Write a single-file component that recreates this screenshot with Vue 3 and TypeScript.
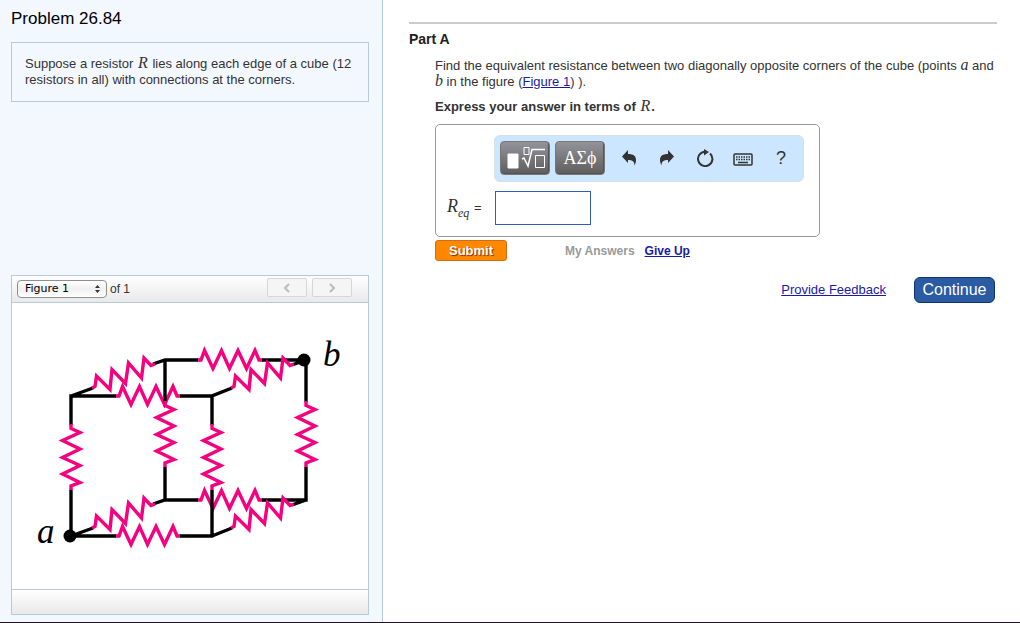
<script setup lang="ts">
import { ref } from 'vue'

interface Point {
  x: number
  y: number
}

const figure = ref('Figure 1')
const answer = ref('')

const horizontal: Point[] = [
  { x: 198, y: 360 },
  { x: 116, y: 396 },
  { x: 198, y: 500 },
  { x: 116, y: 536 },
]
const vertical: Point[] = [
  { x: 71, y: 425 },
  { x: 212, y: 425 },
  { x: 165, y: 402 },
  { x: 306, y: 402 },
]
const diagonal: Point[] = [
  { x: 93, y: 388 },
  { x: 232, y: 388 },
  { x: 93, y: 528 },
  { x: 232, y: 528 },
]
const at = (p: Point): string => `translate(${p.x} ${p.y})`
</script>

<template>
  <div class="page">
    <aside class="side">
      <h1>Problem 26.84</h1>
      <p class="intro">
        Suppose a resistor <i class="math wide">R</i> lies along each edge of a cube (12 resistors in all) with
        connections at the corners.
      </p>

      <section class="figure">
        <header class="figure-head">
          <label class="picker">
            <select v-model="figure" aria-label="Figure">
              <option>Figure 1</option>
            </select>
            <svg class="arrows" viewBox="0 0 5 8" aria-hidden="true">
              <path d="M0 3 2.500 0 5 3zM0 5h5L2.500 8z" />
            </svg>
          </label>
          <span class="count">of 1</span>
          <button class="nav" type="button" aria-label="Previous figure">
            <svg viewBox="0 0 8 10"><path d="M6 1 2 5l4 4" /></svg>
          </button>
          <button class="nav" type="button" aria-label="Next figure">
            <svg viewBox="0 0 8 10"><path d="m2 1 4 4-4 4" /></svg>
          </button>
        </header>
        <svg class="circuit" viewBox="12 303 356 286" role="img" aria-label="Cube of twelve resistors">
          <defs>
            <path id="res-h" d="M-1 0H3L6.500-9.500 15 8.500 23.500-9.500 31.500 8.500 40-9.500 48.500 8.500 57-9.500 61 0H65" />
            <path id="res-v" d="M0-1V3.500L9 7.500-8.500 15.500 9 24-8.500 32.500 9 40.500-8.500 49 9 57.500 0 61V65" />
            <path
              id="res-d"
              d="M-1 0 2-1.500 3.500-12 17 1.500 19-18.500 32.500-4.500 35.500-25 48.500-10 51-30 58-22.500 62-24"
            />
          </defs>
          <g class="resistor">
            <use v-for="(p, i) in horizontal" :key="'h' + i" href="#res-h" :transform="at(p)" />
          </g>
          <path
            class="wire"
            d="M71 425V396H116M71 396 93 388M153 364 165 360H198M262 360H305M180 396H212M212 425V396L232 388M165 360V402M306 402V360L292 365M71 490V536H116M71 536 93 528M153 504 165 500H198M165 467V500M180 536H212V490M212 536 232 528M262 500H306V467M306 500 292 505"
          />
          <g class="resistor">
            <use v-for="(p, i) in vertical" :key="'v' + i" href="#res-v" :transform="at(p)" />
            <use v-for="(p, i) in diagonal" :key="'d' + i" href="#res-d" :transform="at(p)" />
          </g>
          <circle cx="70" cy="536" r="6.500" />
          <circle cx="304" cy="360" r="6.500" />
          <text x="37" y="543">a</text>
          <text x="323" y="366">b</text>
        </svg>
        <footer class="figure-foot"></footer>
      </section>
    </aside>

    <main class="main">
      <h2>Part A</h2>
      <div class="part">
        <p>
          Find the equivalent resistance between two diagonally opposite corners of the cube (points
          <i class="math">a</i> and <i class="math">b</i> in the figure (<a href="#figure">Figure 1</a>) ).
        </p>
        <p class="express">Express your answer in terms of <i class="math wide">R</i>.</p>

        <form class="answer" @submit.prevent>
          <div class="toolbar">
            <button class="key" type="button" aria-label="Math templates">
              <svg viewBox="1 1 48 32">
                <path class="solid" d="M8 13h10v14H8z" />
                <path d="M24 6.500h5v7h-5z" />
                <path class="root" d="M22 18l2-1 4 8 4-16.500H45" />
                <path d="M35.500 14.500h9v12h-9z" />
              </svg>
            </button>
            <button class="key greek" type="button">ΑΣϕ</button>
            <div class="tools">
              <button type="button" aria-label="Undo">
                <svg viewBox="0 0 16 16">
                  <path class="fill" d="M1 6.500 7 0v4c5.500 0 8 2 8 6 0 2-.5 3.500-1.500 5.500 0-4-2-5.500-6.500-5.500v3z" />
                </svg>
              </button>
              <button type="button" aria-label="Redo">
                <svg viewBox="0 0 16 16">
                  <path class="fill" d="M15 6.500 9 0v4c-5.500 0-8 2-8 6 0 2 .5 3.500 1.500 5.500 0-4 2-5.500 6.500-5.500v3z" />
                </svg>
              </button>
              <button type="button" aria-label="Reset">
                <svg class="big" viewBox="0 0 18 18">
                  <path class="line" d="M14 4.500A7.200 7.200 0 1 1 9 2.700" />
                  <path class="fill" d="M8 0 13 3 8 6.500z" />
                </svg>
              </button>
              <button type="button" aria-label="Keyboard">
                <svg class="keyboard" viewBox="0 0 20 13">
                  <rect class="thin" x="1" y="1" width="18" height="11" rx="1" />
                  <path class="keys" d="M3 4h14M3 6.500h14" />
                  <path class="thin" d="M5 9.500h10" />
                </svg>
              </button>
              <button class="help" type="button" aria-label="Help">?</button>
            </div>
          </div>
          <div class="entry">
            <label for="req"><i class="math">R<sub>eq</sub></i> =</label>
            <input id="req" v-model="answer" type="text" autocomplete="off" />
          </div>
        </form>

        <div class="actions">
          <button class="submit" type="button">Submit</button>
          <span class="mine">My Answers</span>
          <a href="#give-up">Give Up</a>
        </div>
      </div>

      <div class="next">
        <a href="#feedback">Provide Feedback</a>
        <button class="continue" type="button">Continue</button>
      </div>
    </main>
  </div>
</template>

<style>
body {
  margin: 0;
  background: #fff;
}
</style>

<style scoped>
.page,
.page * {
  box-sizing: border-box;
}
.page {
  display: flex;
  min-height: 100vh;
  border-bottom: 1px solid #20101f;
  font: 13px/16px 'Liberation Sans', Arial, sans-serif;
  color: #333;
}
h1,
h2,
p {
  margin: 0;
}
button,
input,
select {
  margin: 0;
  font: inherit;
}
button {
  padding: 0;
  cursor: pointer;
}
a {
  color: #1a1aa6;
}
.math {
  font-family: 'Liberation Serif', 'Times New Roman', serif;
  font-size: 16px;
  font-weight: normal;
  line-height: 1px;
}
.wide {
  margin: 0 1px;
}

.side {
  display: flex;
  flex-direction: column;
  flex: 0 0 383px;
  padding: 9px 13px 7px 11px;
  border-right: 1px solid #b5cadd;
  background: #f3f8ff;
}
h1 {
  margin-bottom: 13px;
  font-size: 17px;
  font-weight: normal;
  line-height: 20px;
  color: #000;
}
.intro {
  padding: 13px;
  border: 1px solid #b5cadd;
}
.figure {
  margin-top: auto;
  border: 1px solid #b5cadd;
  background: #fff;
}
.figure-head {
  display: flex;
  align-items: center;
  height: 27px;
  padding: 0 16px 0 5px;
  border-bottom: 1px solid #b5cadd;
  background: linear-gradient(#fff, #e9e9e9);
}
.picker {
  display: grid;
  align-items: center;
}
.picker > * {
  grid-area: 1 / 1;
}
select {
  appearance: none;
  width: 90px;
  height: 18px;
  padding: 0 7px;
  border: 1px solid #8f8f8f;
  border-radius: 4px;
  background: linear-gradient(#fff, #f0f0f0 50%, #fff);
  font: 11px/14px 'DejaVu Sans', sans-serif;
  color: #000;
}
.arrows {
  justify-self: end;
  width: 5px;
  height: 8px;
  margin-right: 7px;
  fill: #333;
  pointer-events: none;
}
.count {
  margin: 0 auto 0 3px;
  font-size: 12px;
}
.nav {
  display: grid;
  place-items: center;
  width: 40px;
  height: 19px;
  margin: 0 0 3px 5px;
  border: 1px solid #d6d6d6;
  border-radius: 2px;
  background: #f5f5f5;
}
.nav svg {
  width: 8px;
  height: 10px;
  fill: none;
  stroke: #bbb;
  stroke-width: 2;
}
.circuit {
  display: block;
  width: 100%;
}
.resistor {
  fill: none;
  stroke: #f5007f;
  stroke-width: 3.4;
  stroke-miterlimit: 8;
}
.wire {
  fill: none;
  stroke: #000;
  stroke-width: 3.4;
}
.circuit circle,
.circuit text {
  fill: #000;
}
.circuit text {
  font: italic 35px 'Liberation Serif', 'Times New Roman', serif;
}
.figure-foot {
  height: 25px;
  border-top: 1px solid #b5cadd;
  background: linear-gradient(#fff, #e9e9e9);
}

.main {
  flex: 1;
  min-width: 0;
  margin: 22px 23px 0 26px;
  border-top: 2px solid #ccc;
}
h2 {
  margin: 7px 0 11px;
  font-size: 14px;
  line-height: 16px;
  color: #222;
}
.part {
  margin-left: 26px;
}
.express {
  margin: 9px 0;
  font-weight: bold;
}
.answer {
  max-width: 385px;
  padding: 10px 15px 11px 11px;
  border: 1px solid #999;
  border-radius: 5px;
}
.toolbar {
  display: flex;
  align-items: center;
  gap: 5px;
  height: 47px;
  margin-left: 47px;
  padding: 0 5px 2px;
  border: 1px solid #d5dfe8;
  border-radius: 6px;
  background: #cce6ff;
}
.key {
  flex: none;
  width: 50px;
  height: 34px;
  border: 1px solid #777;
  border-radius: 4px;
  background: linear-gradient(#93939b, #5e5e5e);
  box-shadow: inset -1px -1px 1px #555;
  color: #fff;
}
.key svg {
  display: block;
  width: 48px;
  height: 32px;
  fill: none;
  stroke: #fff;
}
.key .solid {
  fill: #fff;
}
.key .root {
  stroke-width: 1.5;
}
.greek {
  font: 18px/30px 'Liberation Serif', serif;
}
.tools {
  display: flex;
  flex: 1;
}
.tools button {
  display: grid;
  place-items: center;
  width: 38px;
  height: 34px;
  border: 0;
  background: none;
  color: #333;
}
.tools svg {
  width: 16px;
  height: 16px;
}
.tools .big {
  width: 18px;
  height: 18px;
}
.tools .keyboard {
  width: 20px;
  height: 13px;
  margin-top: 4px;
}
.fill {
  fill: #333;
}
.line,
.thin,
.keys {
  fill: none;
  stroke: #333;
  stroke-width: 2;
}
.thin {
  stroke-width: 1.5;
}
.keys {
  stroke-width: 1.5;
  stroke-dasharray: 1.5 1;
}
.tools .help {
  font-size: 18px;
}
.entry {
  display: flex;
  align-items: center;
  margin-top: 9px;
}
.entry label {
  width: 48px;
}
.entry .math {
  margin-right: 1px;
  font-size: 18px;
}
.entry sub {
  font-size: 12px;
}
.entry input {
  width: 96px;
  height: 34px;
  padding: 0 6px;
  border: 1px solid #3558c8;
  background: #fff;
}
.actions {
  display: flex;
  align-items: center;
  margin-top: 3px;
  font-size: 12px;
  font-weight: bold;
}
.submit {
  width: 72px;
  height: 21px;
  border: 1px solid #d06f10;
  border-radius: 3px;
  background: #ff8800;
  font-size: 13px;
  color: #fff;
  text-shadow: 1px 1px 1px #803000;
}
.mine {
  margin: 0 10px 0 58px;
  color: #999;
}
.next {
  display: flex;
  align-items: center;
  justify-content: flex-end;
  gap: 28px;
  margin: 16px 2px 0 0;
}
.continue {
  width: 81px;
  height: 26px;
  border: 1px solid #0c3470;
  border-radius: 6px;
  background: #2a5ba3;
  font-size: 16px;
  color: #fff;
}
</style>
